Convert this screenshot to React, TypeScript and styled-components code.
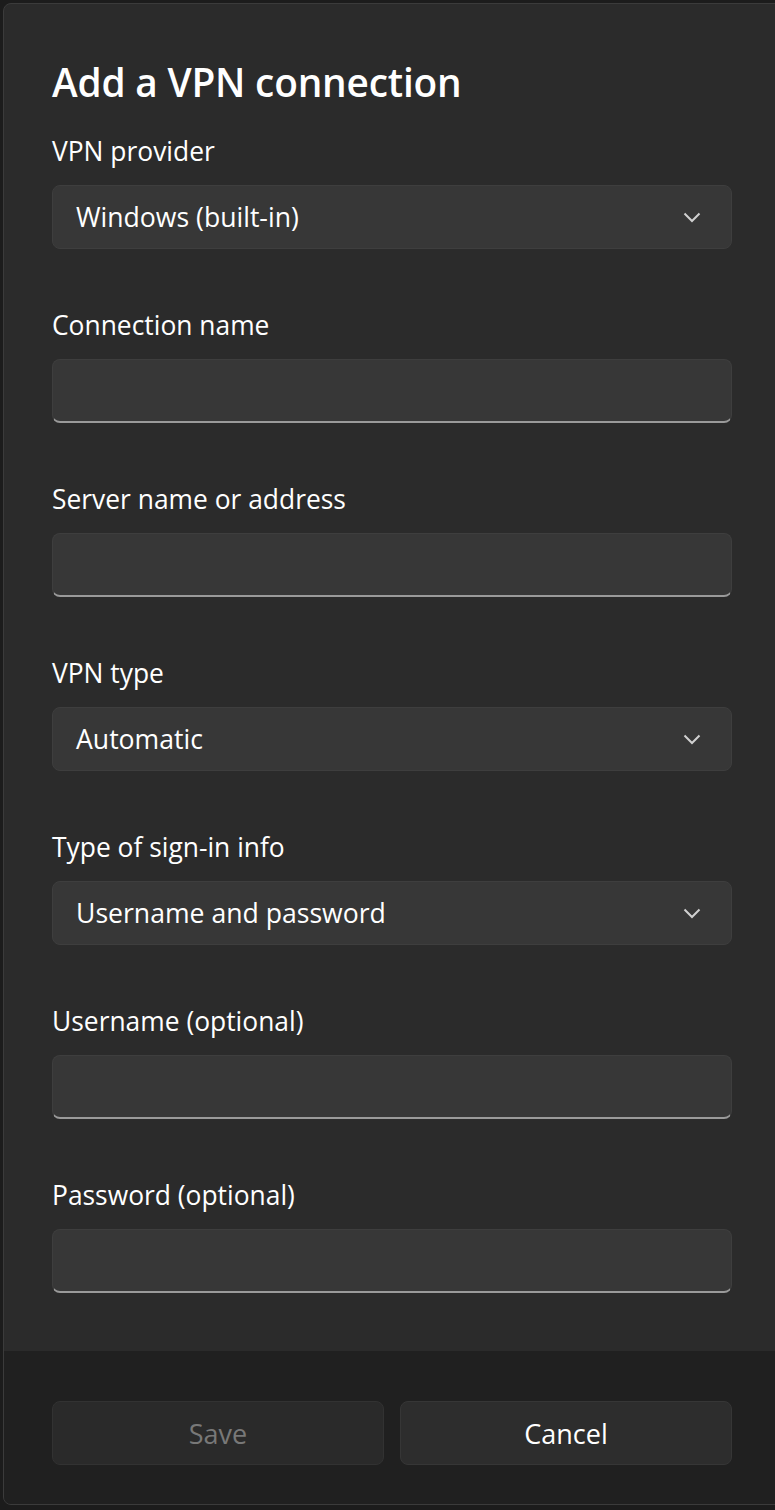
import React from "react";
import styled, { createGlobalStyle } from "styled-components";

const Global = createGlobalStyle`
  html, body { margin: 0; padding: 0; background: #1c1c1c; overflow: hidden; }
  body { font-family: "Open Sans", "Noto Sans", sans-serif; }
`;

const Dialog = styled.div`
  margin: 3px 0 0 3px;
  width: 800px;
  height: 1502px;
  box-sizing: border-box;
  border: 1px solid #3b3b3b;
  border-radius: 8px;
  background: #2b2b2b;
  display: flex;
  flex-direction: column;
  overflow: hidden;
`;

const Content = styled.div`
  padding: 52px 0 0 48px;
  height: 1347px;
  box-sizing: border-box;
  display: flex;
  flex-direction: column;
`;

const Title = styled.h1`
  margin: 0 0 24px;
  font-size: 38.8px;
  line-height: 52px;
  font-weight: 600;
  color: #ffffff;
  letter-spacing: -0.2px;
`;

const Field = styled.div`
  display: flex;
  flex-direction: column;
  width: 680px;
  margin-bottom: 57px;
`;

const Label = styled.label`
  font-size: 26.4px;
  line-height: 38px;
  color: #ffffff;
  margin-bottom: 15px;
`;

const Box = styled.div<{ $input?: boolean }>`
  height: 64px;
  box-sizing: border-box;
  border-radius: 8px;
  background: #373737;
  border: 1px solid #3e3e3e;
  ${(p) => (p.$input ? "border-bottom: 2px solid #9a9a9a;" : "")}
  display: flex;
  align-items: center;
  justify-content: space-between;
  padding: 0 30px 0 23px;
  font-size: 26.6px;
  color: #ffffff;
`;

const Footer = styled.div`
  flex: 1;
  background: #202020;
  display: grid;
  grid-template-columns: 332px 332px;
  column-gap: 16px;
  padding: 50px 0 0 48px;
  align-content: start;
`;

const Button = styled.button<{ $disabled?: boolean }>`
  height: 64px;
  border-radius: 8px;
  font-family: inherit;
  font-size: 27px;
  background: ${(p) => (p.$disabled ? "#2a2a2a" : "#2d2d2d")};
  border: 1px solid ${(p) => (p.$disabled ? "#323232" : "#363636")};
  color: ${(p) => (p.$disabled ? "#787878" : "#ffffff")};
  padding: 0;
`;

const Chevron = () => (
  <svg width="18" height="11" viewBox="0 0 18 11">
    <path d="M1.5 1.5 L9 9 L16.5 1.5" fill="none" stroke="#d0d0d0" strokeWidth="2" />
  </svg>
);

const fields: { label: string; value?: string; select?: boolean }[] = [
  { label: "VPN provider", value: "Windows (built-in)", select: true },
  { label: "Connection name" },
  { label: "Server name or address" },
  { label: "VPN type", value: "Automatic", select: true },
  { label: "Type of sign-in info", value: "Username and password", select: true },
  { label: "Username (optional)" },
  { label: "Password (optional)" },
];

export default function App() {
  return (
    <>
      <Global />
      <Dialog>
        <Content>
          <Title>Add a VPN connection</Title>
          {fields.map((f) => (
            <Field key={f.label}>
              <Label>{f.label}</Label>
              <Box $input={!f.select}>
                {f.select ? (
                  <>
                    <span>{f.value}</span>
                    <Chevron />
                  </>
                ) : null}
              </Box>
            </Field>
          ))}
        </Content>
        <Footer>
          <Button $disabled>Save</Button>
          <Button>Cancel</Button>
        </Footer>
      </Dialog>
    </>
  );
}
